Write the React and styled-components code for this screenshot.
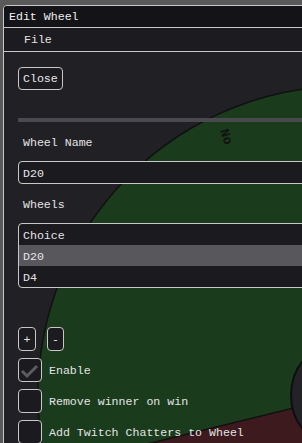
import styled, { createGlobalStyle } from "styled-components";

const GlobalStyle = createGlobalStyle`
    body {
        margin: 0;
        background: #595959;
        overflow: hidden;
        font-family: "Liberation Mono", "DejaVu Sans Mono", monospace;
        font-size: 11.6px;
        color: #e4e4e4;
    }
`;

const Page = styled.div`
    height: 443px;
    padding: 5px 0 0 3px;
    box-sizing: border-box;
    overflow: hidden;
`;

const Window = styled.div`
    width: 420px;
    height: 460px;
    border: 1px solid #c8c8c8;
    border-radius: 4px 0 0 0;
    background: #212024;
    display: flex;
    flex-direction: column;
    overflow: hidden;
`;

const TitleBar = styled.div`
    height: 21px;
    flex: none;
    display: flex;
    align-items: center;
    padding-left: 5px;
    background: #141318;
    border-bottom: 1px solid #c8c8c8;
    color: #f0f0f0;
`;

const MenuBar = styled.div`
    height: 23px;
    flex: none;
    display: flex;
    align-items: center;
    padding-left: 20px;
    background: #1c1b20;
    border-bottom: 1px solid #c8c8c8;
`;

const Content = styled.div`
    position: relative;
    flex: 1;
    display: flex;
    flex-direction: column;
    align-items: flex-start;
    padding: 15px 0 0 14px;
`;

const WheelCanvas = styled.svg`
    position: absolute;
    top: 0;
    left: 0;
    width: 420px;
    height: 408px;
`;

const Layer = styled.div`
    position: relative;
    z-index: 1;
    box-sizing: border-box;
    margin-top: ${({ $top }) => $top || 0}px;
`;

const Button = styled.button`
    height: ${({ $h }) => $h || 23}px;
    min-width: ${({ $w }) => ($w ? `${$w}px` : "auto")};
    padding: 0 4px;
    box-sizing: border-box;
    display: flex;
    align-items: center;
    justify-content: center;
    background: #1c1b20;
    border: 1px solid #c8c8c8;
    border-radius: 4px;
    color: #e8e8e8;
    font: inherit;
`;

const Separator = styled(Layer)`
    width: 400px;
    height: 4px;
    background: #4a4950;
`;

const Label = styled(Layer)`
    height: 16px;
    line-height: 16px;
    padding: 1px 0 0 5px;
`;

const Input = styled(Layer)`
    width: 400px;
    height: 23px;
    display: flex;
    align-items: center;
    padding: 1px 0 0 4px;
    background: #1b1a1f;
    border: 1px solid #c8c8c8;
    border-radius: 4px 0 0 4px;
`;

const ListBox = styled(Layer)`
    width: 400px;
    border: 1px solid #c8c8c8;
    border-radius: 4px 0 0 4px;
    background: #1b1a1f;
    overflow: hidden;
`;

const Row = styled.div`
    height: 21px;
    box-sizing: border-box;
    display: flex;
    align-items: center;
    padding: 1px 0 0 4px;
    background: ${({ $selected }) => ($selected ? "#58575c" : "transparent")};
`;

const ButtonRow = styled(Layer)`
    display: flex;
    gap: 11px;
`;

const CheckRow = styled(Layer)`
    display: flex;
    align-items: center;
    gap: 7px;
`;

const CheckBox = styled.div`
    width: 24px;
    height: 24px;
    box-sizing: border-box;
    background: #1b1a1f;
    border: 1px solid #c8c8c8;
    border-radius: 4px;
    display: flex;
    align-items: center;
    justify-content: center;
`;

const CheckText = styled.span`
    padding-top: 1px;
`;

const Check = () => (
    <svg width="22" height="22" viewBox="0 0 22 22">
        <polyline points="3,12 8,17 18,7" fill="none" stroke="#5c5b60" strokeWidth="3" />
    </svg>
);

const Wheel = () => (
    <WheelCanvas viewBox="4 52 420 408">
        <circle cx="347" cy="395" r="309" fill="#1a3b1c" stroke="#111" strokeWidth="1.5" />
        <path d="M347 395 L46.9 468.5 A309 309 0 0 0 347 704 Z" fill="#3d1a1e" stroke="#111" strokeWidth="1.5" />
        <text x="211" y="137" fontSize="13" fontWeight="bold" fill="#111" fontFamily="Liberation Mono, monospace" transform="rotate(72 220 140)">No</text>
        <circle cx="347" cy="395" r="56" fill="#232227" stroke="#0e0e10" strokeWidth="2" />
    </WheelCanvas>
);

const options = [
    { name: "Remove winner on win" },
    { name: "Add Twitch Chatters to Wheel" },
];

export default function App() {
    return (
        <>
            <GlobalStyle />
            <Page>
                <Window>
                    <TitleBar>Edit Wheel</TitleBar>
                    <MenuBar>File</MenuBar>
                    <Content>
                        <Wheel />
                        <Layer>
                            <Button>Close</Button>
                        </Layer>
                        <Separator $top={28} />
                        <Label $top={12}>Wheel Name</Label>
                        <Input $top={11}>D20</Input>
                        <Label $top={12}>Wheels</Label>
                        <ListBox $top={11}>
                            <Row>Choice</Row>
                            <Row $selected>D20</Row>
                            <Row>D4</Row>
                        </ListBox>
                        <ButtonRow $top={39}>
                            <Button $h={24} $w={18}>+</Button>
                            <Button $h={24} $w={17}>-</Button>
                        </ButtonRow>
                        <CheckRow $top={7}>
                            <CheckBox><Check /></CheckBox>
                            <CheckText>Enable</CheckText>
                        </CheckRow>
                        {options.map((o) => (
                            <CheckRow key={o.name} $top={7}>
                                <CheckBox />
                                <CheckText>{o.name}</CheckText>
                            </CheckRow>
                        ))}
                    </Content>
                </Window>
            </Page>
        </>
    );
}
